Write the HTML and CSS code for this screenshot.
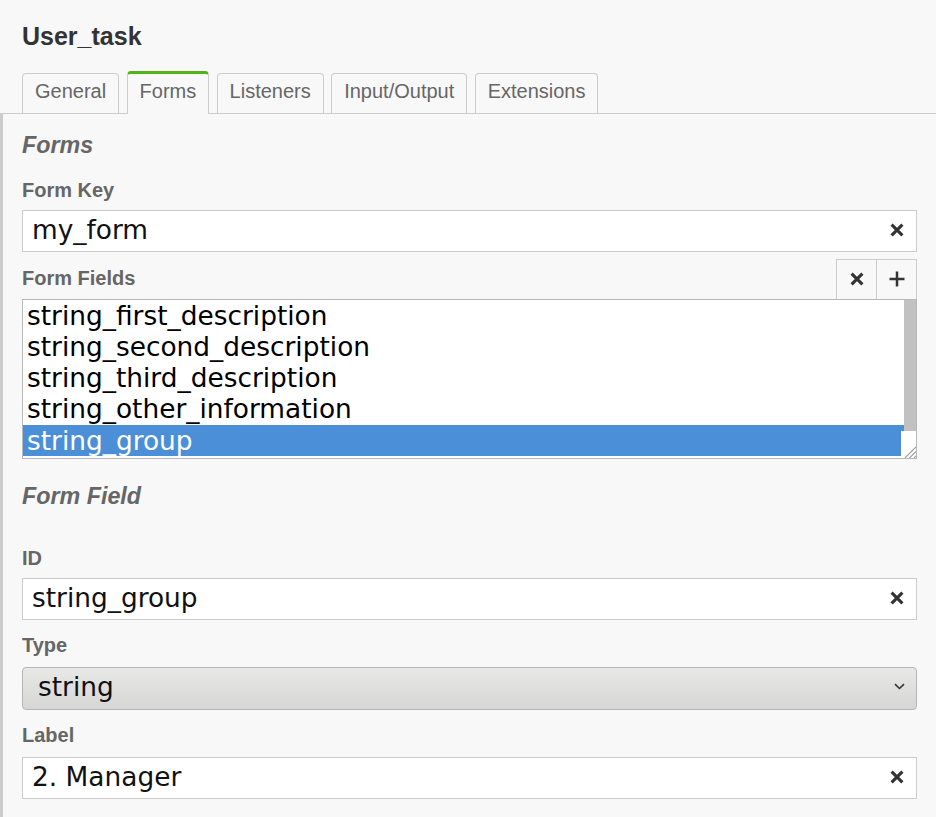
FILE: index.html
```html
<!DOCTYPE html>
<html>
<head>
<meta charset="utf-8">
<link rel="stylesheet" href="styles.css">
</head>
<body>
<div class="panel">
  <div class="title">User_task</div>
  <div class="tabs">
    <div class="tab">General</div>
    <div class="tab active">Forms</div>
    <div class="tab">Listeners</div>
    <div class="tab">Input/Output</div>
    <div class="tab">Extensions</div>
  </div>
  <div class="content">
    <div class="group-title">Forms</div>
    <div class="label lbl-first">Form Key</div>
    <div class="field f-key">
      <span class="value">my_form</span>
      <svg class="clear" width="14" height="14" viewBox="0 0 14 14"><path d="M1.6 1.6L12.4 12.4M12.4 1.6L1.6 12.4" stroke="#333" stroke-width="3.1" fill="none"/></svg>
    </div>
    <div class="fields-head">
      <div class="label lbl-inline">Form Fields</div>
      <div class="btns">
        <div class="btn"><svg width="14" height="14" viewBox="0 0 14 14"><path d="M1.6 1.6L12.4 12.4M12.4 1.6L1.6 12.4" stroke="#333" stroke-width="3.1" fill="none"/></svg></div>
        <div class="btn btn-add"><svg width="16" height="16" viewBox="0 0 16 16"><path d="M8 0.5V15.5M0.5 8H15.5" stroke="#333" stroke-width="2.5" fill="none"/></svg></div>
      </div>
    </div>
    <div class="listbox">
      <div class="items">
        <div class="item">string_first_description</div>
        <div class="item">string_second_description</div>
        <div class="item">string_third_description</div>
        <div class="item">string_other_information</div>
        <div class="item selected">string_group</div>
      </div>
      <div class="scrollbar"><div class="thumb"></div></div>
      <div class="resizer"><svg width="13" height="13" viewBox="0 0 13 13"><path d="M13 2L2 13M13 6.5L6.5 13M13 11L11 13" stroke="#a0a0a0" stroke-width="1.2" fill="none"/></svg></div>
    </div>
    <div class="group-title gt-field">Form Field</div>
    <div class="label lbl-id">ID</div>
    <div class="field f-id">
      <span class="value">string_group</span>
      <svg class="clear" width="14" height="14" viewBox="0 0 14 14"><path d="M1.6 1.6L12.4 12.4M12.4 1.6L1.6 12.4" stroke="#333" stroke-width="3.1" fill="none"/></svg>
    </div>
    <div class="label lbl-mid">Type</div>
    <div class="select">
      <span class="value">string</span>
      <svg class="chev" width="11" height="7" viewBox="0 0 11 7"><path d="M1 1.2L5.5 5.5L10 1.2" stroke="#333" stroke-width="1.6" fill="none"/></svg>
    </div>
    <div class="label lbl-mid2">Label</div>
    <div class="field f-label">
      <span class="value">2. Manager</span>
      <svg class="clear" width="14" height="14" viewBox="0 0 14 14"><path d="M1.6 1.6L12.4 12.4M12.4 1.6L1.6 12.4" stroke="#333" stroke-width="3.1" fill="none"/></svg>
    </div>
  </div>
</div>
</body>
</html>
```

FILE: styles.css
```css
html, body {
  margin: 0;
  padding: 0;
}
body {
  background: #f8f8f8;
  width: 936px;
  height: 817px;
  overflow: hidden;
  font-family: "Liberation Sans", Arial, sans-serif;
}
.panel {
  display: flex;
  flex-direction: column;
  height: 817px;
}
.title {
  padding: 22px 0 0 22px;
  font-size: 25px;
  line-height: 29px;
  font-weight: bold;
  color: #333;
}
.tabs {
  margin-top: 20px;
  height: 42px;
  display: flex;
  align-items: flex-end;
  gap: 7.4px;
  padding-left: 22px;
  border-bottom: 1px solid #ccc;
}
.tab {
  box-sizing: border-box;
  height: 40px;
  padding: 6px 12px 0 12px;
  border: 1px solid #ccc;
  border-bottom: none;
  border-radius: 4px 4px 0 0;
  font-size: 20px;
  line-height: 23px;
  color: #666;
  background: #f8f8f8;
}
.tab.active {
  height: 43px;
  margin-bottom: -1px;
  border-top: 3px solid #52b415;
  position: relative;
}
.content {
  flex: 1;
  border-left: 3px solid #ccc;
  padding: 17.5px 19px 0 19px;
  display: flex;
  flex-direction: column;
}
.group-title {
  font-size: 23.3px;
  line-height: 27px;
  font-weight: bold;
  font-style: italic;
  color: #666;
}
.gt-field {
  margin-top: 24.5px;
}
.label {
  font-size: 20px;
  line-height: 23px;
  font-weight: bold;
  color: #666;
}
.lbl-first { margin-top: 20.7px; }
.lbl-id { margin-top: 36.7px; }
.lbl-mid { margin-top: 13.7px; }
.lbl-mid2 { margin-top: 14.3px; }
.field {
  box-sizing: border-box;
  height: 42.4px;
  background: #fff;
  border: 1px solid #ccc;
  display: flex;
  align-items: center;
  padding: 0 12.5px 2px 9px;
  font-family: "DejaVu Sans", sans-serif;
  font-size: 26.4px;
  line-height: 30px;
  color: #111;
}
.f-key { margin-top: 7.8px; }
.f-id { margin-top: 8.1px; }
.f-label { margin-top: 9.7px; }
.value {
  flex: 1;
  white-space: nowrap;
}
.clear {
  flex: none;
  display: block;
}
.fields-head {
  margin-top: 6.6px;
  height: 39.7px;
  display: flex;
  justify-content: space-between;
}
.lbl-inline {
  margin-top: 7.6px;
}
.btns {
  display: flex;
  border: 1px solid #ccc;
  border-bottom: none;
}
.btn {
  width: 39px;
  display: flex;
  align-items: center;
  justify-content: center;
}
.btn-add {
  border-left: 1px solid #ccc;
}
.listbox {
  box-sizing: border-box;
  height: 160px;
  border: 1px solid #b8b8b8;
  background: #fff;
  display: flex;
  position: relative;
  font-family: "DejaVu Sans", sans-serif;
  font-size: 26.4px;
  color: #000;
}
.items {
  flex: 1;
  overflow: hidden;
}
.item {
  height: 31.25px;
  line-height: 31.25px;
  padding-left: 4px;
  white-space: nowrap;
}
.item.selected {
  background: #4a8fd8;
  color: #fff;
}
.scrollbar {
  width: 12px;
  display: flex;
  flex-direction: column;
}
.thumb {
  flex: 1;
  background: #c1c1c1;
}
.resizer {
  position: absolute;
  right: 0;
  bottom: 0;
  width: 15.3px;
  height: 26.3px;
  background: #fff;
  display: flex;
  align-items: flex-end;
  justify-content: flex-end;
}
.resizer svg {
  display: block;
}
.select {
  box-sizing: border-box;
  margin-top: 9.7px;
  height: 43px;
  border: 1px solid #b5b5b5;
  border-radius: 4px;
  background: linear-gradient(#e8e8e7, #d6d6d5);
  display: flex;
  align-items: center;
  padding: 0 11px 2.6px 15px;
  font-family: "DejaVu Sans", sans-serif;
  font-size: 26.4px;
  line-height: 30px;
  color: #111;
}
.chev {
  flex: none;
  display: block;
}
```
